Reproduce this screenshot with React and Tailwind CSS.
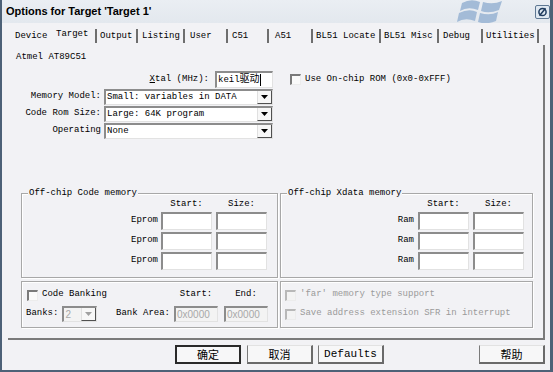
import React from "react";

const mono = "font-['Liberation_Mono','Noto_Sans_CJK_SC',monospace]";
const panelBg = "bg-[#f2f2f5]";

const tabs = [
  { label: "Device", box: "w-[42px] pl-[5px]" },
  { label: "Target", box: "w-[45px] pl-[4px] border-r-2", active: true },
  { label: "Output", box: "w-[41px] pl-[3px] border-r-2" },
  { label: "Listing", box: "w-[47px] pl-[4px] border-r-2" },
  { label: "User", box: "w-[43px] pl-[5px] border-r-2" },
  { label: "C51", box: "w-[41px] pl-[4px] border-r-2" },
  { label: "A51", box: "w-[44px] pl-[6px] border-r-2" },
  { label: "BL51 Locate", box: "w-[68px] pl-[3px] border-r-2" },
  { label: "BL51 Misc", box: "w-[58px] pl-[3px] border-r-2" },
  { label: "Debug", box: "w-[44px] pl-[4px] border-r-2" },
  { label: "Utilities", box: "w-[56px] pl-[3px] border-r-2" },
];

// sunken edit box
const Field = ({ className = "", disabled, children }) => (
  <div
    className={`h-full border-t-2 border-l-2 border-t-[#8c8c8c] border-l-[#8c8c8c] border-r border-b border-r-[#e2e2e2] border-b-[#e2e2e2] ${
      disabled ? "bg-[#f3f3f3]" : "bg-white"
    } ${className}`}
  >
    {children}
  </div>
);

const Arrow = ({ color = "#000" }) => (
  <svg width="7" height="4" viewBox="0 0 7 4">
    <path d="M0 0h7L3.5 4z" fill={color} />
  </svg>
);

const Combo = ({ value, className = "", disabled }) => (
  <Field className={`flex ${className}`} disabled={disabled}>
    <span
      className={`flex-1 pl-[1px] leading-[13px] whitespace-nowrap overflow-hidden ${
        disabled ? "text-[#a8a8a8] font-['Liberation_Sans',sans-serif] text-[10px]" : ""
      }`}
    >
      {value}
    </span>
    <span className="w-[15px] flex items-center justify-center bg-[#f7f7f7] border-l border-l-[#e0e0e0] border-r border-b border-r-[#505050] border-b-[#505050]">
      <Arrow color={disabled ? "#a0a0a0" : "#000"} />
    </span>
  </Field>
);

const Check = ({ disabled, className = "" }) => (
  <span
    className={`block w-[11px] h-[11px] shrink-0 border-t-2 border-l-2 border-r border-b border-r-[#ececec] border-b-[#ececec] ${
      disabled
        ? "border-t-[#b8b8b8] border-l-[#b8b8b8] bg-[#f3f3f3]"
        : "border-t-[#7a7a7a] border-l-[#7a7a7a] bg-[#fafafa]"
    } ${className}`}
  />
);

const Group = ({ title, className = "", children }) => (
  <div
    className={`relative border border-[#a8a8a8] shadow-[inset_1px_1px_0_#ffffff,1px_1px_0_#ffffff] ${className}`}
  >
    {title && (
      <span className={`absolute -top-[7px] left-[6px] px-[1px] leading-[12px] ${panelBg}`}>
        {title}
      </span>
    )}
    {children}
  </div>
);

const MemoryBox = ({ title, label, className, labelGap, pr }) => (
  <Group title={title} className={`h-[85px] ${className}`}>
    <div className={`flex flex-col ${pr}`}>
      <div className="flex justify-end gap-[4px] pt-[4px] leading-[12px]">
        <span className="w-[51px] text-center">Start:</span>
        <span className="w-[51px] text-center">Size:</span>
      </div>
      <div className="flex flex-col gap-[2px] mt-[2px]">
        {[0, 1, 2].map((i) => (
          <div key={i} className="flex justify-end items-center gap-[4px] h-[18px]">
            <span className={labelGap}>{label}</span>
            <Field className="w-[51px]" />
            <Field className="w-[51px]" />
          </div>
        ))}
      </div>
    </div>
  </Group>
);

const Button = ({ children, className = "", isDefault }) => (
  <div
    className={`h-[19px] w-[66px] flex items-center justify-center bg-[#f7f7f8] text-[11px] ${
      isDefault
        ? "border-2 border-[#2a2a2a]"
        : "border-t border-l border-t-[#e2e2e2] border-l-[#7a7a7a] border-r-2 border-b-2 border-r-[#6a6a6a] border-b-[#6a6a6a]"
    } ${className}`}
  >
    {children}
  </div>
);

const WinFlag = () => (
  <svg width="46" height="23" viewBox="0 0 46 23" className="mr-[32px]">
    <g fill="#a3bbd7">
      <path d="M3 11 Q11 6 21 10 L23 2 Q14 -2 5 3 Z" />
      <path d="M24 11 Q32 14 42 10 L45 1 Q36 5 26 2 Z" />
      <path d="M0 22 Q8 17 18 21 L20 12 Q12 8 2 13 Z" />
      <path d="M21 22 Q29 25 39 21 L41 12 Q33 16 23 13 Z" />
    </g>
  </svg>
);

const CloseBtn = () => (
  <svg width="15" height="14" viewBox="0 0 15 14" className="mt-[1px]">
    <rect x="0.5" y="0.5" width="14" height="13" rx="1.5" fill="#dfe8f1" stroke="#5f7893" />
    <circle cx="7.5" cy="7" r="3.6" fill="none" stroke="#1f3b5e" strokeWidth="1.5" />
    <path d="M10.5 3.2 L4.5 10.8" stroke="#1f3b5e" strokeWidth="1.5" />
  </svg>
);

export default function App() {
  return (
    <div
      className={`w-[553px] h-[372px] overflow-hidden flex flex-col ${panelBg} border-l-2 border-b-2 border-r-[3px] border-[#4d6177] text-[9px] text-black ${mono}`}
    >
      {/* title bar */}
      <div className="h-[23px] shrink-0 flex items-center pl-[4px] bg-gradient-to-b from-[#eaeef3] to-[#e3e8ee]">
        <span className="font-['Liberation_Sans',sans-serif] font-bold text-[11px] text-black">
          Options for Target 'Target 1'
        </span>
        <div className="flex-1" />
        <div className="self-start">
          <WinFlag />
        </div>
        <div className="self-start pt-[4px]">
          <CloseBtn />
        </div>
      </div>

      {/* tabs */}
      <div className="flex pl-[8px] pt-[6px] h-[20px] shrink-0">
        {tabs.map((t) => (
          <div
            key={t.label}
            className={`h-[14px] leading-[14px] whitespace-nowrap border-[#6e6e6e] ${t.box}`}
          >
            <span className={t.active ? "block -mt-[2px]" : ""}>{t.label}</span>
          </div>
        ))}
      </div>

      {/* tab page */}
      <div className="ml-[6px] mt-[2px] w-[537px] h-[295px] shrink-0 border-r-2 border-b-2 border-[#7a7a7a] flex flex-col">
        <div className="pl-[8px] pt-[6px] leading-[12px]">Atmel AT89C51</div>

        <div className="flex items-center h-[17px] mt-[8px]">
          <span className="w-[201px] text-right">
            <span className="underline">X</span>tal (MHz):
          </span>
          <Field className="ml-[6px] w-[58px] flex items-center">
            <span className="pl-[1px] leading-[13px] whitespace-nowrap">
              keil<span className="text-[10px]">驱动</span>
            </span>
            <span className="w-px h-[12px] bg-black" />
          </Field>
          <Check className="ml-[17px]" />
          <span className="ml-[4px]">Use On-chip ROM (0x0-0xFFF)</span>
        </div>

        <div className="flex flex-col gap-[1px] mt-[1px]">
          {[
            ["Memory Model:", "Small: variables in DATA"],
            ["Code Rom Size:", "Large: 64K program"],
            ["Operating", "None"],
          ].map(([label, value]) => (
            <div key={label} className="flex items-center h-[16px]">
              <span className="w-[93px] text-right">{label}</span>
              <Combo value={value} className="ml-[3px] w-[169px]" />
            </div>
          ))}
        </div>

        <div className="flex mt-[54px] ml-[13px] gap-[2px]">
          <MemoryBox
            title="Off-chip Code memory"
            label="Eprom"
            className="w-[257px]"
            labelGap="mr-[-1px]"
            pr="pr-[10px]"
          />
          <MemoryBox
            title="Off-chip Xdata memory"
            label="Ram"
            className="w-[253px]"
            labelGap="mr-[0px]"
            pr="pr-[8px]"
          />
        </div>

        <div className="flex mt-[3px] ml-[13px] gap-[2px]">
          <Group className="w-[257px] h-[47px] pl-[4px] pr-[9px] pt-[7px]">
            <div className="flex items-center h-[12px]">
              <Check className="ml-[1px]" />
              <span className="ml-[4px] flex-1">Code Banking</span>
              <span className="w-[44px] text-center">Start:</span>
              <span className="w-[44px] ml-[6px] text-center">End:</span>
            </div>
            <div className="flex items-center h-[16px] mt-[5px]">
              <span>Banks:</span>
              <Combo value="2" disabled className="ml-[4px] w-[35px]" />
              <span className="flex-1" />
              <span className="mr-[4px]">Bank Area:</span>
              <Field disabled className="w-[44px]">
                <span className="block pl-[1px] leading-[13px] text-[10px] text-[#a8a8a8] font-['Liberation_Sans',sans-serif]">
                  0x0000
                </span>
              </Field>
              <Field disabled className="w-[44px] ml-[6px]">
                <span className="block pl-[1px] leading-[13px] text-[10px] text-[#a8a8a8] font-['Liberation_Sans',sans-serif]">
                  0x0000
                </span>
              </Field>
            </div>
          </Group>
          <Group className="w-[253px] h-[47px] pl-[4px] pt-[7px] text-[#9a9a9a]">
            <div className="flex items-center h-[12px]">
              <Check disabled />
              <span className="ml-[4px]">'far' memory type support</span>
            </div>
            <div className="flex items-center h-[12px] mt-[7px]">
              <Check disabled />
              <span className="ml-[4px]">Save address extension SFR in interrupt</span>
            </div>
          </Group>
        </div>
      </div>

      {/* buttons */}
      <div className="flex mt-[5px] font-['Noto_Sans_CJK_SC',sans-serif]">
        <Button isDefault className="ml-[173px]">确定</Button>
        <Button className="ml-[6px]">取消</Button>
        <Button className={`ml-[5px] text-[9px] ${mono}`}>Defaults</Button>
        <div className="flex-1" />
        <Button className="mr-[5px]">帮助</Button>
      </div>
    </div>
  );
}
